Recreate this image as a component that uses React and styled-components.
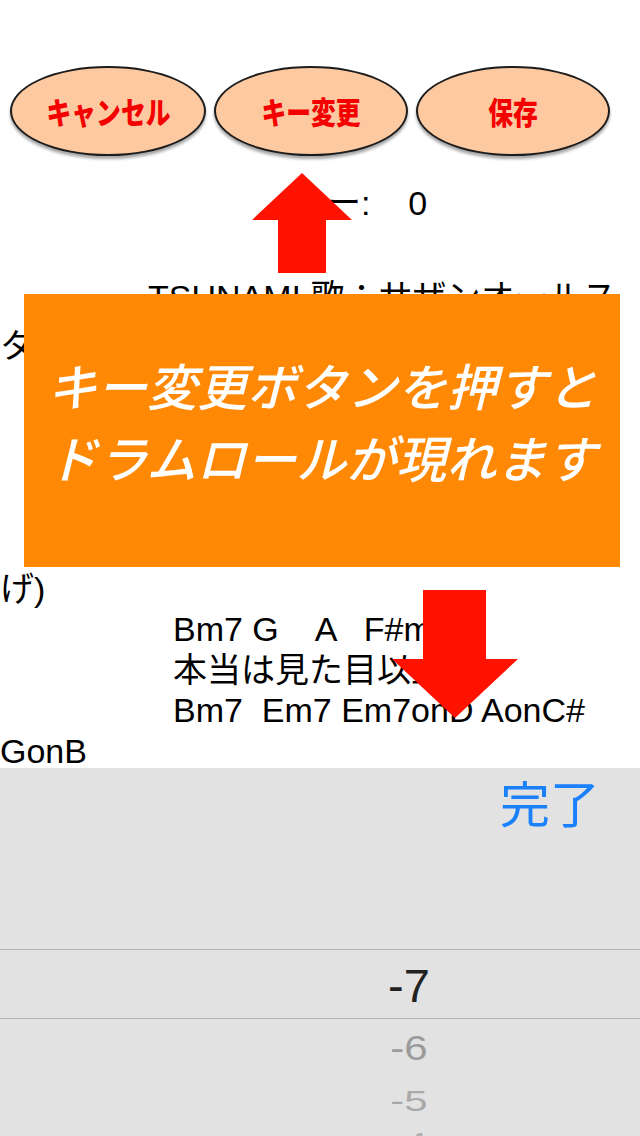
import React from 'react';
import styled, { createGlobalStyle } from 'styled-components';

const GlobalStyle = createGlobalStyle`
  html, body {
    margin: 0;
    padding: 0;
    background: #ffffff;
  }
`;

const Page = styled.div`
  position: relative;
  width: 640px;
  height: 1136px;
  overflow: hidden;
  display: flex;
  flex-direction: column;
  background: #ffffff;
  font-family: "Liberation Sans", "Noto Sans CJK JP", sans-serif;
`;

// 上部の楕円ボタン
const ButtonRow = styled.div`
  display: flex;
  gap: 8px;
  padding: 66px 0 0 10px;
  flex-shrink: 0;
`;

const OvalButton = styled.div`
  width: ${p => p.w}px;
  height: 90px;
  box-sizing: border-box;
  border-radius: 50%;
  border: 2px solid #1c1c1c;
  background: #fdc9a1;
  box-shadow: 0 3px 3px rgba(0, 0, 0, 0.35);
  display: flex;
  align-items: center;
  justify-content: center;
`;

const OvalLabel = styled.span`
  display: inline-block;
  color: #f40000;
  font-family: "Noto Sans CJK JP", sans-serif;
  font-size: 31px;
  font-weight: 900;
  line-height: 1.2;
  transform: scaleX(0.8);
  white-space: nowrap;
`;

const KeyLabel = styled.div`
  margin-top: 27px;
  padding-left: 293px;
  font-size: 34px;
  line-height: 40px;
  color: #000;
  white-space: pre;
  flex-shrink: 0;
`;

const Lyrics = styled.div`
  margin-top: 54px;
  flex: 1;
  min-height: 0;
  overflow: hidden;
`;

const Line = styled.div`
  padding-left: ${p => p.indent || 0}px;
  font-size: 34px;
  line-height: 40.5px;
  height: ${p => p.h || 40.5}px;
  color: #000;
  white-space: pre;
`;

// 下部のピッカー
const Picker = styled.div`
  flex-shrink: 0;
  height: 368px;
  overflow: hidden;
  background: #e2e2e2;
  display: flex;
  flex-direction: column;
`;

const Toolbar = styled.div`
  flex-shrink: 0;
  height: 66px;
  display: flex;
  align-items: center;
  justify-content: flex-end;
  padding-right: 40px;
`;

const DoneButton = styled.span`
  color: #1a80fb;
  font-family: "Noto Sans CJK JP", sans-serif;
  font-size: 50px;
  line-height: 1.2;
`;

const Wheel = styled.div`
  flex-shrink: 0;
  padding-top: 115px;
  display: flex;
  flex-direction: column;
`;

const SelectedRow = styled.div`
  height: 70px;
  box-sizing: border-box;
  border-top: 1px solid #b4b4b4;
  border-bottom: 1px solid #b4b4b4;
  display: flex;
  align-items: center;
  justify-content: center;
  padding: 2px 0 0 178px;
  font-size: 47px;
  color: #222;
`;

const WheelRow = styled.div`
  flex-shrink: 0;
  height: ${p => p.h}px;
  display: flex;
  align-items: center;
  justify-content: center;
  padding-left: 178px;
  font-size: 42px;
  color: ${p => p.color};
  & > span {
    display: inline-block;
    transform: scaleY(${p => p.squash});
  }
`;

// 説明用のオーバーレイ
const Callout = styled.div`
  position: absolute;
  left: 24px;
  top: 294px;
  width: 596px;
  height: 273px;
  background: #ff8805;
  box-sizing: border-box;
  padding-top: 54px;
  display: flex;
  flex-direction: column;
  align-items: center;
`;

const CalloutText = styled.div`
  color: #ffffff;
  font-family: "Noto Sans CJK JP", sans-serif;
  font-size: 50px;
  font-style: italic;
  font-weight: 500;
  line-height: 72px;
  text-align: center;
  white-space: nowrap;
`;

const Arrow = styled.svg`
  position: absolute;
  left: ${p => p.x}px;
  top: ${p => p.y}px;
`;

const buttons = [
  { label: 'キャンセル', w: 196 },
  { label: 'キー変更', w: 194 },
  { label: '保存', w: 194 },
];

const lyricLines = [
  { indent: 148, text: 'TSUNAMI 歌：サザンオールス', h: 48.5 },
  { indent: 0, text: 'ターズ' },
  { indent: 173, text: 'G    D    Em   Bm7' },
  { indent: 173, text: '風に戸惑う弱気な僕' },
  { indent: 173, text: 'C    G    Am7  D' },
  { indent: 173, text: '通りすがるあの日の' },
  { indent: 60, text: '(ここでキーを半音上' },
  { indent: 0, text: 'げ)' },
  { indent: 173, text: 'Bm7 G    A   F#m' },
  { indent: 173, text: '本当は見た目以上' },
  { indent: 173, text: 'Bm7  Em7 Em7onD AonC#' },
  { indent: 0, text: 'GonB' },
];

const wheelRows = [
  { value: '-6', h: 58, color: '#9b9b9b', squash: 0.84 },
  { value: '-5', h: 48, color: '#a9a9a9', squash: 0.72 },
  { value: '-4', h: 36, color: '#b2b2b2', squash: 0.6 },
];

export default function App() {
  return (
    <Page>
      <GlobalStyle />

      <ButtonRow>
        {buttons.map(b => (
          <OvalButton key={b.label} w={b.w}>
            <OvalLabel>{b.label}</OvalLabel>
          </OvalButton>
        ))}
      </ButtonRow>

      <KeyLabel>{'キー:    0'}</KeyLabel>

      <Lyrics>
        {lyricLines.map((l, i) => (
          <Line key={i} indent={l.indent} h={l.h}>{l.text}</Line>
        ))}
      </Lyrics>

      <Picker>
        <Toolbar>
          <DoneButton>完了</DoneButton>
        </Toolbar>
        <Wheel>
          <SelectedRow>-7</SelectedRow>
          {wheelRows.map(r => (
            <WheelRow key={r.value} h={r.h} color={r.color} squash={r.squash}>
              <span>{r.value}</span>
            </WheelRow>
          ))}
        </Wheel>
      </Picker>

      <Callout>
        <CalloutText>キー変更ボタンを押すと</CalloutText>
        <CalloutText>ドラムロールが現れます</CalloutText>
      </Callout>

      <Arrow x={252} y={173} width="100" height="100" viewBox="0 0 100 100">
        <polygon points="50,0 100,47 74,47 74,100 26,100 26,47 0,47" fill="#ff1200" />
      </Arrow>

      <Arrow x={392} y={590} width="126" height="128" viewBox="0 0 126 128">
        <polygon points="31,0 94,0 94,69 126,69 63,128 0,69 31,69" fill="#ff1200" />
      </Arrow>
    </Page>
  );
}
